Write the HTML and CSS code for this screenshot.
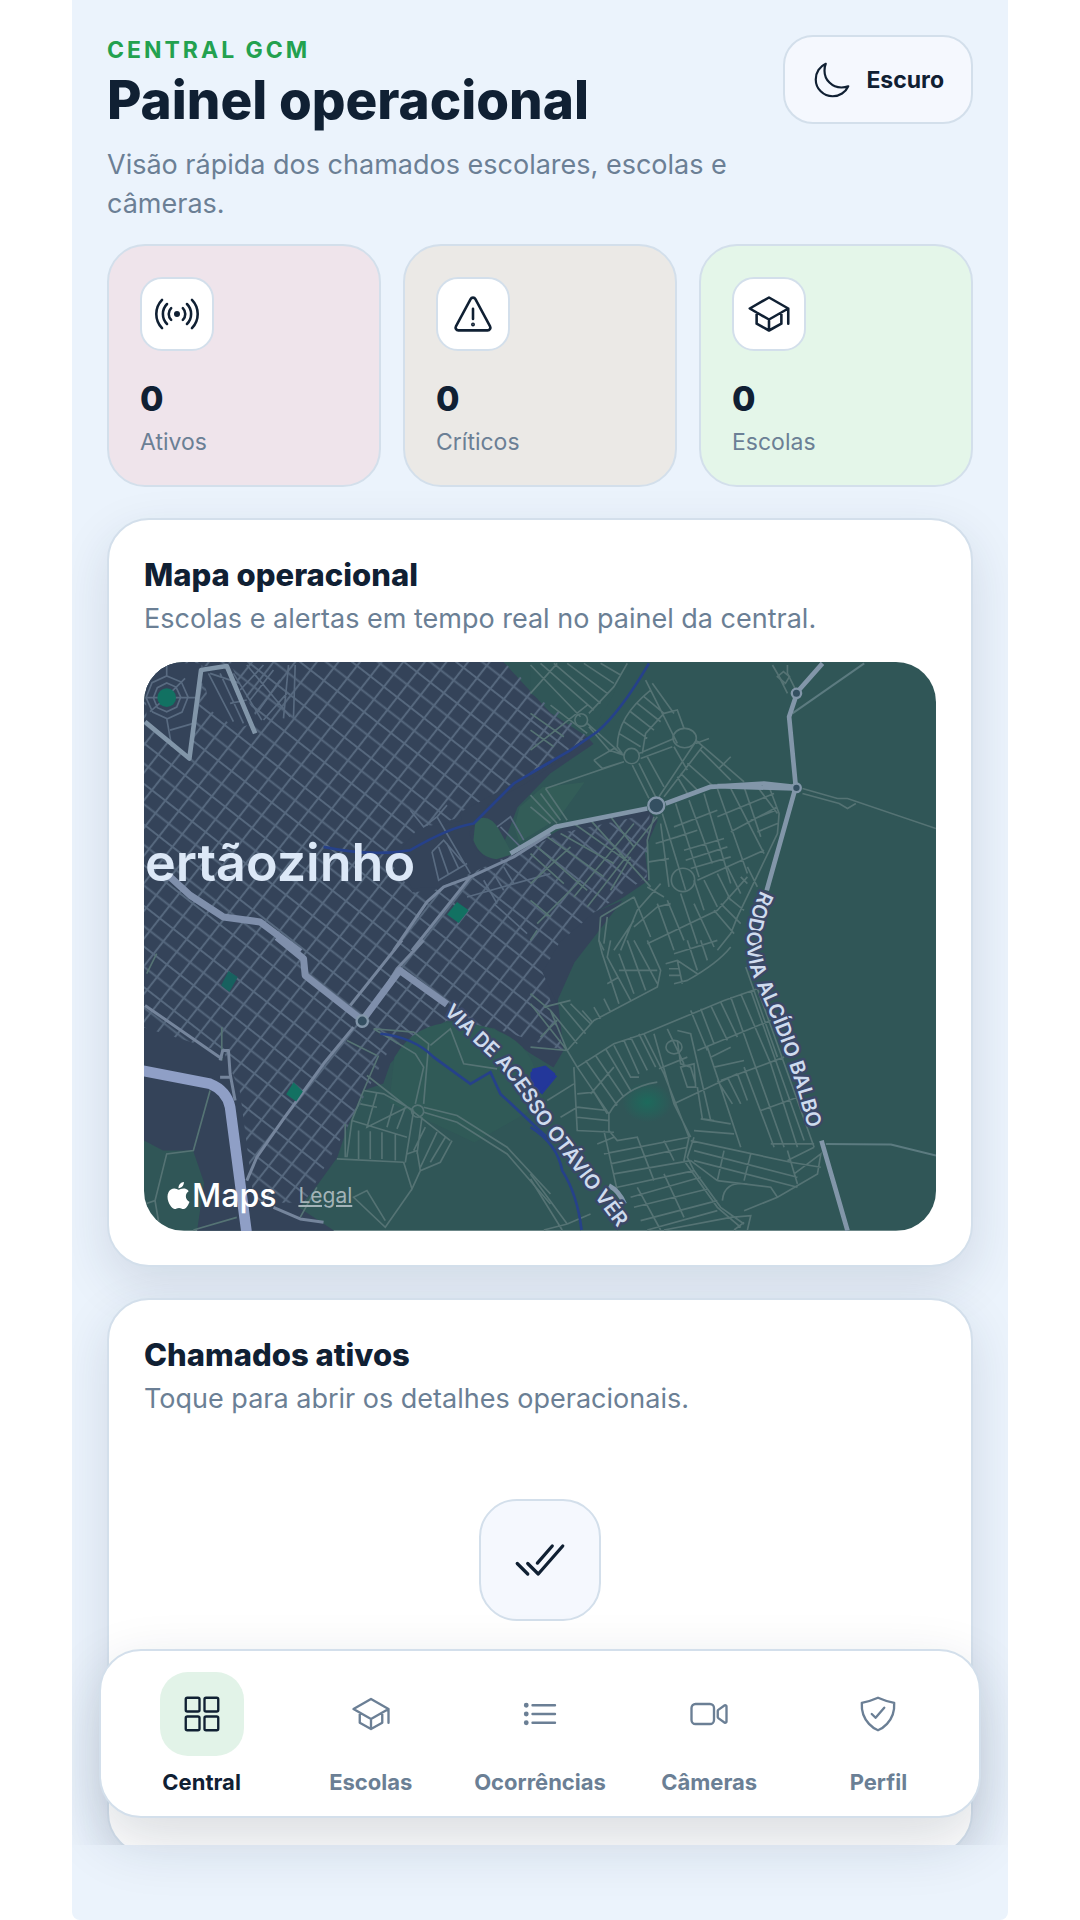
FILE: index.html
```html
<!DOCTYPE html>
<html lang="pt-BR">
<head>
<meta charset="utf-8">
<meta name="viewport" content="width=device-width, initial-scale=1">
<title>Central GCM</title>
<link rel="stylesheet" href="styles.css">
</head>
<body>
<svg class="sprite" aria-hidden="true">
  <symbol id="i-school" viewBox="0 0 512 512"><path d="M32 192L256 64l224 128-224 128L32 192zM112 240v128l144 80 144-80V240M480 368V192M256 320v128"/></symbol>
</svg>
<div class="app">
  <main class="content">
    <header class="header">
      <div class="heading">
        <p class="eyebrow">CENTRAL GCM</p>
        <h1>Painel operacional</h1>
        <p class="lead">Visão rápida dos chamados escolares, escolas e câmeras.</p>
      </div>
      <button class="theme" type="button">
        <svg class="icon icon-lg" viewBox="0 0 512 512" aria-hidden="true"><path d="M160 136c0-30.62 4.51-61.61 16-88C99.57 81.27 48 159.32 48 248c0 119.29 96.71 216 216 216 88.68 0 166.73-51.57 200-128-26.39 11.49-57.38 16-88 16-119.29 0-216-96.71-216-216z"/></svg>
        Escuro
      </button>
    </header>

    <section class="stats" aria-label="Resumo">
      <article class="stat stat-active">
        <span class="stat-icon"><svg class="icon icon-xl" viewBox="0 0 512 512" aria-hidden="true"><circle class="solid" cx="256" cy="256" r="20"/><path d="M188 188a96 96 0 000 136M324 188a96 96 0 010 136M140 140a164 164 0 000 232M372 140a164 164 0 010 232M82 91a237 237 0 000 330M430 91a237 237 0 010 330"/></svg></span>
        <strong>0</strong><span class="stat-label">Ativos</span>
      </article>
      <article class="stat stat-critical">
        <span class="stat-icon"><svg class="icon icon-xl" viewBox="0 0 512 512" aria-hidden="true"><path d="M85.57 446.25h340.86a32 32 0 0028.17-47.17L284.18 82.58c-12.09-22.44-44.27-22.44-56.36 0L57.4 399.08a32 32 0 0028.17 47.17zM256 196v118"/><circle class="solid" cx="256" cy="377" r="8"/></svg></span>
        <strong>0</strong><span class="stat-label">Críticos</span>
      </article>
      <article class="stat stat-schools">
        <span class="stat-icon"><svg class="icon icon-xl" aria-hidden="true"><use href="#i-school"/></svg></span>
        <strong>0</strong><span class="stat-label">Escolas</span>
      </article>
    </section>

    <section class="card">
      <h2>Mapa operacional</h2>
      <p class="card-text">Escolas e alertas em tempo real no painel da central.</p>
      <div class="map">
        <svg class="map-art" viewBox="0 0 791 568" role="img" aria-label="Mapa de Sertãozinho">
          <defs>
            <pattern id="blocks" width="17" height="32" patternUnits="userSpaceOnUse" patternTransform="rotate(38)">
              <path class="street" d="M0 0V32M17 0V32M0 0H17M0 16H17M0 32H17"/>
            </pattern>
            <radialGradient id="park"><stop offset="0" stop-color="#1d6a5c"/><stop offset="1" stop-color="#1d6a5c" stop-opacity="0"/></radialGradient>
            <path id="via" d="M299 350L337 387Q367 413 389 453L510 614"/>
            <path id="rodovia" d="M616 228C600 262 597 290 612 322C632 366 648 404 668 484L680 530"/>
          </defs>
          <rect class="land" width="791" height="568"/>
          <path class="urban" d="M0 0H359L406 51L443 75L449 82L406 111L373 145L356 190L386 185L419 165L503 148L513 158L500 188L504 218L479 235L449 251L433 281L426 298L413 335L419 388L409 405L386 391L350 366L303 358L269 375L246 401L239 421L219 428L203 465L193 495L169 528L155 545L190 568H53L60 520L49 488L19 488L0 478Z"/>
          <path fill="url(#blocks)" d="M0 0H359L443 75L330 150L300 160L285 165L240 192L268 230L290 228L350 200L420 170L505 152L502 215L449 251L413 300L405 335L419 388L350 366L303 358L246 385L203 465L160 540L110 540L96 430L80 390L0 365Z"/>
          <path class="urban" d="M316 150L430 88L380 122L345 140L320 178ZM275 165L320 158L330 185L345 200L295 225L268 226L250 195ZM450 250L478 238L430 300L412 340L398 310L415 280Z"/>
          <path class="grove" d="M331 158Q345 150 355 168L368 192L352 197Q335 195 329 178ZM375 145L398 125L440 120L415 155L375 180L370 165Z"/>
          <path class="grove-soft" d="M250 395Q275 352 330 362Q375 370 388 400L400 440L330 480L245 440Z"/>

          <g transform="translate(-14 -12) scale(.3333)">
            <path class="mask" d="M45 40H215L180 320L50 215ZM215 50L300 40L385 215L320 235L240 180Z"/>
            <path class="lane town-lane" d="M110 143m-40 0l12-30 28-14 28 12 14 30-12 30-30 14-28-12zM110 143m-62 0l18-45 44-20 44 18 20 45-18 45-44 20-44-20zM110 80V40M110 205L125 290M48 143H90M130 143H210M60 185L95 155M125 125L165 85M215 100L200 190M120 240L190 220M235 70L310 215M270 70L340 220M310 70L395 210M350 45L480 200M330 100L240 70M350 150L300 160M400 210L470 130M380 190L450 90M360 150L430 60M330 120L400 45M475 45L460 205M495 45L490 200M840 480L880 530L920 500L1020 670M920 500L950 465M905 605L925 690L1010 640M905 605L940 570L1000 640M925 590L955 675M950 580L985 655M1010 740L1260 670M1060 690L1100 760M1090 670L1120 720M1120 650L1150 700M1090 760L1190 850M1110 530L1170 590M1100 530L1140 500L1180 570"/>
            <path class="river" d="M580 590Q720 620 840 600Q960 530 1030 520L1150 400L1260 335"/>
            <path class="road" d="M790 900L890 755L940 710L1020 680L1150 620L1260 550M845 900L1020 680"/>
            <path class="road-main" d="M45 215L178 325L213 60L290 48L375 250"/>
            <path class="road-wide" d="M120 680L180 735L280 800L390 815L510 905"/>
            <circle class="park" cx="110" cy="143" r="28"/><path class="park" d="M980 755l35 25-30 38-35-25z"/>
          </g>

          <g transform="translate(386 -12) scale(.3333)">
            <path class="land" d="M30 45L290 40L240 150L180 250L0 130V45Z"/>
            <path class="lane" d="M0 130L80 40M0 45L150 200M30 40L190 180M70 40L210 160M110 40L230 130M160 40L250 100M210 40L270 75M0 300L170 165M0 190L100 260M0 240L70 290M290 40L250 110L175 190M60 165L170 250M175 230L235 300L280 315M170 220L260 300M345 90L400 200L440 280M365 100L430 190M360 120Q260 200 260 290L275 310M340 140L400 190M320 160L390 215M300 185L370 240M280 215L350 265M265 250L330 290M400 190L345 250L335 310M400 190L440 180L460 235M325 310L430 265M330 325L425 290M305 345L355 445M325 340L375 440M350 320L400 410M190 330L250 295L280 315M190 330L215 355L280 335M45 415L280 335M45 415L110 510M0 435L80 520M30 430L90 510M0 470L60 520M430 290L470 360M495 275L385 440M515 290L400 440M535 265L495 280M495 270L640 395M510 300L600 390M470 340L550 410M600 320L565 355M450 370L500 420M440 380L470 430M395 490L465 720M435 460L505 680M475 450L545 640M520 430L600 700M560 415L650 670M600 415L700 610M640 410L690 560M680 410L740 490M430 530L560 480M440 560L500 540M460 600L580 565M465 630L590 590M480 655L600 620M500 690L700 600M560 500L730 430M600 545L740 470M660 510L735 480M680 545L740 520M715 410L745 490L740 550L620 800L600 850L560 900M370 500L350 570L355 690M375 580L440 560M355 635L415 625M390 520L415 710M350 710L400 740M490 690L520 780M520 690L560 770M560 670L600 750M590 650L630 730M630 680L650 700M650 650L680 710M310 740L360 860M380 760L430 900M410 750L460 870M450 730L500 880M490 760L550 890M310 830L380 770L420 760M350 880L560 780L650 680M550 780L610 850M570 760L630 820M590 740L640 780M210 800L310 740M210 800L205 870L220 900M230 800L220 880M310 810L250 900M390 700L320 780L270 900M0 610L100 700M20 590L170 720M50 560L220 680M90 550L250 640M130 520L300 640M180 510L360 710M240 500L310 590M0 700L120 590M20 820L150 690M170 770L380 500M130 740L310 520M240 720L300 620M0 750L60 800M20 840L0 870M725 45L760 105M745 80L770 130M770 45V70L800 130"/>
            <g class="lane"><circle cx="152" cy="210" r="19"/><circle cx="303" cy="318" r="23"/><ellipse cx="462" cy="264" rx="35" ry="29"/><circle cx="457" cy="689" r="35"/><path d="M740 80l18-15 18 15-12 20zM815 415L920 445L950 445L1215 535M815 430L925 460L950 475L975 460"/></g>
            <path class="road thin" d="M1000 40L785 190"/>
            <path class="river" d="M0 370L120 300L200 245Q270 185 355 40"/>
            <path class="road-main" d="M-60 610L0 575L75 530L350 475M405 460L540 410L700 400L790 410M560 408L790 415"/>
            <path class="road-main" d="M875 40L800 125L775 200L795 410L708 720"/>
            <circle class="ring" cx="377" cy="466" r="24"/><circle class="ring" cx="797" cy="130" r="14"/><circle class="ring" cx="797" cy="413" r="13"/>
          </g>

          <g transform="translate(-14 278) scale(.3333)">
            <path class="lane" d="M745 345L700 450L665 540L650 650M700 450L760 460L850 510M710 405L960 600M740 345L650 300M830 500L710 560L740 455M770 560L790 490M800 565L825 500M665 540L830 590M620 655L820 665M645 550V650M685 570V655M720 572V655M755 575V655M795 580V660M690 490L740 500M850 510L825 665M875 530L860 640M830 640L860 630L870 690M820 665L845 745L870 690L930 665L965 600M885 560L850 630M920 575L870 680M945 590L900 665M855 490L880 380L855 340L730 265M880 490L895 310L850 275L730 265M900 315L960 265L1000 370L1100 385M880 500L980 525L1130 620L1260 760M880 515L980 545L1130 640L1260 790M845 745L765 860L670 770L710 750L765 840M240 450L190 630L110 640L75 780L45 790M75 780L90 868M190 868L320 830M560 740L510 830M275 260V360M50 100L80 40"/>
            <circle class="lane" cx="862" cy="512" r="18"/>
            <path class="river" d="M750 280Q850 290 910 350L1020 430L1080 395L1110 460L1260 600"/>
            <path class="water" d="M1200 395l40-18 40 30-45 55-35-30z"/>
            <path class="road" d="M660 195L815 0M670 260L580 370L460 535L380 650L350 720M690 260L730 200L800 85L880 0M45 195L275 355"/>
            <path class="road-wide" d="M440 -10L520 55L525 105L690 235M700 235L808 90L950 192"/>
            <circle class="ring" cx="696" cy="242" r="17"/>
            <path class="road" d="M270 360L278 330H295L300 400L315 480M270 410H300M430 800L510 835L580 845"/>
            <path class="highway" d="M35 390L240 430Q290 450 300 500L350 880"/>
            <path class="park" d="M490 425l28 28-20 30-30-22z"/><path class="park dim" d="M295 92l28 18-25 45-25-20z"/>
          </g>

          <g transform="translate(386 278) scale(.3333)">
            <ellipse cx="350" cy="485" rx="75" ry="60" fill="url(#park)"/>
            <path class="lane" d="M205 0L215 40L265 190M240 0L230 50L300 180M265 40L310 160M290 0L345 150M310 0L380 130M350 0L390 90L380 140L190 240L110 330M265 90H380M230 130L265 110M405 70L440 60L500 100M415 85H445M415 105H450M430 130L470 120Q560 70 600 20M440 60L455 130M430 40L560 0M470 0L500 90M510 0L530 60M110 330L60 210L0 160M40 200L120 180M60 210L140 310M90 190L165 280M120 190L180 250M155 210L185 245M190 200L210 235M220 175L240 215M110 330L140 380L250 310L340 280L580 180L680 145M0 190L110 330M0 320L110 330M30 290L80 240M130 380L140 570L250 575M140 380L235 520M165 360L260 495M195 345L280 470M225 325L300 450M250 315L300 410L325 410M280 300L325 400M300 290L350 390M325 280L375 380M180 460L250 380M235 520Q280 440 380 425M235 520V570L260 600L320 590L370 720M140 460L190 455L230 520M140 500L230 510M140 530L235 540M50 480L130 430M90 530L140 500M370 280L430 490L480 590M340 280L400 400L475 590M385 385L470 350M430 490L620 400M410 265L460 370M440 270L480 280L540 540M440 300L450 370L480 380L495 430M450 380L490 370L495 440L470 440ZM500 440L515 535L550 540M480 210L530 330M510 205L550 310M540 195L590 300M570 185L620 290M600 170L760 620M630 160L720 370L800 620M660 150L820 600M680 145L850 620M500 330L720 240M540 350L600 320M550 380L640 360M570 420L760 350M530 320L630 620M560 420L605 490M590 410L630 490M620 400L650 480M640 380L730 620M690 510L800 470M720 610L850 610M510 535L600 550M490 570L610 580M480 600L780 665L870 680M490 630L800 710M490 660L800 740M580 630L560 720M660 640L640 720M560 720L720 740L740 770M560 720L480 660M575 780Q580 720 650 730M770 630L800 730M770 660L850 620M790 700L870 640L860 700L740 770L640 810M645 80L740 350M490 590L470 650L490 690L570 800L640 850M475 590L460 660L560 800L630 860M200 610L250 590M220 640L475 590M240 670L470 620M250 700L480 660M260 740L490 690M300 770L510 710M310 800L530 745M330 840L560 780M220 570L260 750M400 600L430 660M320 740L390 868M400 700L460 830M350 868L560 810M400 868L600 830M600 830L660 825L650 868M640 845L610 868M0 700L110 850M0 715L95 868M110 850L180 820M110 850L40 868"/>
            <ellipse class="lane" cx="430" cy="320" rx="24" ry="20"/>
            <path class="river" d="M0 560Q80 610 95 690Q140 760 153 868"/>
            <path class="road thin" d="M885 610L1080 612L1215 645"/>
            <path class="road-main" d="M872 600L950 870M235 735Q265 750 282 790"/>
            <path class="water" d="M5 385l40-10 30 25-25 35-25 25-25-30z"/>
          </g>

          <text class="road-name"><textPath href="#via">VIA DE ACESSO OTÁVIO VÉR</textPath></text>
          <text class="road-name"><textPath href="#rodovia">RODOVIA ALCÍDIO BALBO</textPath></text>
          <text class="city" x="1" y="219">ertãozinho</text>
        </svg>
        <div class="attribution">
          <span class="brand"><svg viewBox="0 0 24 24" aria-hidden="true"><path d="M12.152 6.896c-.948 0-2.415-1.078-3.96-1.04-2.04.027-3.91 1.183-4.961 3.014-2.117 3.675-.546 9.103 1.519 12.09 1.013 1.454 2.208 3.09 3.792 3.039 1.52-.065 2.09-.987 3.935-.987 1.831 0 2.35.987 3.96.948 1.637-.026 2.676-1.48 3.676-2.948 1.156-1.688 1.636-3.325 1.662-3.415-.039-.013-3.182-1.221-3.22-4.857-.026-3.04 2.48-4.494 2.597-4.559-1.429-2.09-3.623-2.324-4.39-2.376-2-.156-3.675 1.09-4.61 1.09zM15.53 3.83c.843-1.012 1.4-2.427 1.245-3.83-1.207.052-2.662.805-3.532 1.818-.78.896-1.454 2.338-1.273 3.714 1.338.104 2.715-.688 3.559-1.701"/></svg>Maps</span>
          <a href="#legal">Legal</a>
        </div>
      </div>
    </section>

    <section class="card calls">
      <h2>Chamados ativos</h2>
      <p class="card-text">Toque para abrir os detalhes operacionais.</p>
      <div class="empty"><svg class="icon icon-2xl" viewBox="0 0 512 512" aria-hidden="true"><path d="M464 128L240 384l-96-96M144 384l-96-96M368 128L232 284"/></svg></div>
    </section>
  </main>

  <nav class="tabs" aria-label="Principal">
    <a class="tab current" href="#central" aria-current="page"><span class="tab-icon"><svg class="icon" viewBox="0 0 512 512" aria-hidden="true"><rect x="48" y="48" width="176" height="176" rx="20"/><rect x="288" y="48" width="176" height="176" rx="20"/><rect x="48" y="288" width="176" height="176" rx="20"/><rect x="288" y="288" width="176" height="176" rx="20"/></svg></span>Central</a>
    <a class="tab" href="#escolas"><span class="tab-icon"><svg class="icon" aria-hidden="true"><use href="#i-school"/></svg></span>Escolas</a>
    <a class="tab" href="#ocorrencias"><span class="tab-icon"><svg class="icon" viewBox="0 0 512 512" aria-hidden="true"><path d="M160 144h288M160 256h288M160 368h288"/><g class="solid"><circle cx="80" cy="144" r="16"/><circle cx="80" cy="256" r="16"/><circle cx="80" cy="368" r="16"/></g></svg></span>Ocorrências</a>
    <a class="tab" href="#cameras"><span class="tab-icon"><svg class="icon" viewBox="0 0 512 512" aria-hidden="true"><path d="M374.79 308.78L457.5 367a16 16 0 0022.5-14.62V159.62A16 16 0 00457.5 145l-82.71 58.22A16 16 0 00368 216.3v79.4a16 16 0 006.79 13.08zM268 384H84a52.15 52.15 0 01-52-52V180a52.15 52.15 0 0152-52h184.48A51.68 51.68 0 01320 179.52V332a52.15 52.15 0 01-52 52z"/></svg></span>Câmeras</a>
    <a class="tab" href="#perfil"><span class="tab-icon"><svg class="icon" viewBox="0 0 512 512" aria-hidden="true"><path d="M336 176L225.2 304 176 255.8M463.1 112.37C373.68 96.33 336.71 84.45 256 48c-80.71 36.45-117.68 48.33-207.1 64.37C32.7 369.13 240.58 457.79 256 464c15.42-6.21 223.3-94.87 207.1-351.63z"/></svg></span>Perfil</a>
  </nav>
</div>
</body>
</html>
```
FILE: styles.css
```css
:root {
  --bg: #ebf3fc;
  --ink: #102033;
  --muted: #6b7f95;
  --line: #d3dfeb;
  --surface: #f5f8fe;
}

* { box-sizing: border-box; }

body {
  margin: 0;
  background: #fff;
  color: var(--ink);
  font-family: Inter, "Liberation Sans", sans-serif;
}

h1, h2, p { margin: 0; }

.sprite { position: absolute; width: 0; height: 0; }

.app {
  position: relative;
  display: flex;
  flex-direction: column;
  max-width: 936px;
  height: 100vh;
  margin: 0 auto;
  padding-bottom: 75px;
  overflow: hidden;
  background: var(--bg);
  border-radius: 0 0 8px 8px;
}

.content {
  display: flex;
  flex: 1;
  flex-direction: column;
  min-height: 0;
  padding: 35px 35px 0;
  overflow-y: auto;
  scrollbar-width: none;
}

.icon {
  flex: none;
  width: 40px;
  height: 40px;
  fill: none;
  stroke: currentColor;
  stroke-width: 30;
  stroke-linecap: round;
  stroke-linejoin: round;
}
.icon .solid { fill: currentColor; }
.icon-lg { stroke-width: 28; }
.icon-xl { width: 44px; height: 44px; }
.icon-2xl { width: 56px; height: 56px; }

.header {
  display: flex;
  align-items: flex-start;
  justify-content: space-between;
  margin-bottom: 21px;
}
.heading { max-width: 640px; }
.eyebrow {
  color: #23a14f;
  font-size: 23px;
  font-weight: 700;
  line-height: 30px;
  letter-spacing: 3px;
}
h1 {
  margin-bottom: 10px;
  font-size: 53px;
  font-weight: 800;
  line-height: 70px;
}
.lead {
  color: var(--muted);
  font-size: 27px;
  line-height: 39px;
}
.theme {
  display: flex;
  align-items: center;
  gap: 14px;
  height: 89px;
  padding: 0 27px;
  border: 2px solid var(--line);
  border-radius: 30px;
  background: var(--surface);
  color: var(--ink);
  font: 700 23px Inter, "Liberation Sans", sans-serif;
}

.stats {
  display: grid;
  grid-template-columns: repeat(3, 1fr);
  gap: 22px;
  margin-bottom: 31px;
}
.stat {
  display: flex;
  flex-direction: column;
  align-items: flex-start;
  padding: 31px 31px 28px;
  border: 2px solid var(--line);
  border-radius: 38px;
}
.stat-active { background: #efe4eb; }
.stat-critical { background: #ebe9e6; }
.stat-schools { background: #e4f6e9; }
.stat-icon {
  display: grid;
  place-items: center;
  width: 74px;
  height: 74px;
  border: 2px solid var(--line);
  border-radius: 22px;
  background: #fff;
}
.stat strong {
  margin-top: 26px;
  font-size: 34px;
  font-weight: 800;
  line-height: 44px;
}
.stat-label {
  margin-top: 6px;
  color: var(--muted);
  font-size: 23px;
  line-height: 30px;
}

.card {
  flex: none;
  margin-bottom: 31px;
  padding: 36px 35px 34px;
  border: 2px solid var(--line);
  border-radius: 42px;
  background: #fff;
  box-shadow: 0 18px 50px rgba(30, 50, 75, .13);
}
h2 {
  font-size: 31px;
  font-weight: 800;
  line-height: 38px;
}
.card-text {
  margin-top: 8px;
  color: var(--muted);
  font-size: 27px;
  line-height: 34px;
}

.map {
  position: relative;
  margin-top: 26px;
  overflow: hidden;
  border-radius: 40px;
}
.map-art { display: block; width: 100%; }
.land { fill: #305657; }
.urban, .mask { fill: #344359; }
.grove { fill: #335d58; }
.grove-soft { fill: #305a57; }
.street { fill: none; stroke: #56687e; stroke-width: 2; }
.lane { fill: none; stroke: #557374; stroke-width: 5; }
.town-lane { stroke: #596b81; }
.road, .road-main, .road-wide, .highway { fill: none; stroke-linejoin: round; }
.road { stroke: #75859c; stroke-width: 9; }
.road.thin { stroke: #5c7b80; stroke-width: 6; }
.road-main { stroke: #8296a9; stroke-width: 14; }
.road-wide { stroke: #7f8fab; stroke-width: 21; }
.highway { stroke: #8f9fc6; stroke-width: 32; }
.ring { fill: #344f61; stroke: #8296a9; stroke-width: 7; }
.river { fill: none; stroke: #26418a; stroke-width: 8; }
.water { fill: #23379a; }
.park { fill: #127162; }
.park.dim { fill: #17615f; }
.road-name {
  fill: #cfdbee;
  stroke: #3a4867;
  stroke-width: 5px;
  stroke-linejoin: round;
  paint-order: stroke;
  font-size: 20px;
  font-weight: 600;
}
.city { fill: #dce8f7; font-size: 52px; font-weight: 600; }

.attribution {
  position: absolute;
  bottom: 16px;
  left: 21px;
  display: flex;
  align-items: center;
  gap: 22px;
}
.brand {
  display: flex;
  align-items: center;
  color: #fff;
  font-size: 32px;
  font-weight: 500;
  line-height: 38px;
}
.brand svg { width: 27px; height: 27px; fill: currentColor; }
.attribution a { color: #a3b3b8; font-size: 21px; }

.calls { margin-bottom: 0; padding-bottom: 232px; }
.empty {
  display: grid;
  place-items: center;
  width: 122px;
  height: 122px;
  margin: 83px auto 0;
  border: 2px solid var(--line);
  border-radius: 38px;
  background: var(--surface);
}

.tabs {
  position: absolute;
  right: 27px;
  bottom: 102px;
  left: 27px;
  display: grid;
  grid-template-columns: repeat(5, 1fr);
  padding: 21px 16px 20px;
  border: 2px solid var(--line);
  border-radius: 42px;
  background: #fff;
  box-shadow: 0 22px 60px rgba(20, 35, 60, .16);
}
.tab {
  display: flex;
  flex-direction: column;
  align-items: center;
  gap: 12px;
  color: var(--muted);
  font-size: 22px;
  font-weight: 700;
  line-height: 28px;
  text-decoration: none;
}
.tab-icon {
  display: grid;
  place-items: center;
  width: 84px;
  height: 84px;
  border-radius: 28px;
}
.current { color: var(--ink); }
.current .tab-icon { background: #e2f3e8; }
```
